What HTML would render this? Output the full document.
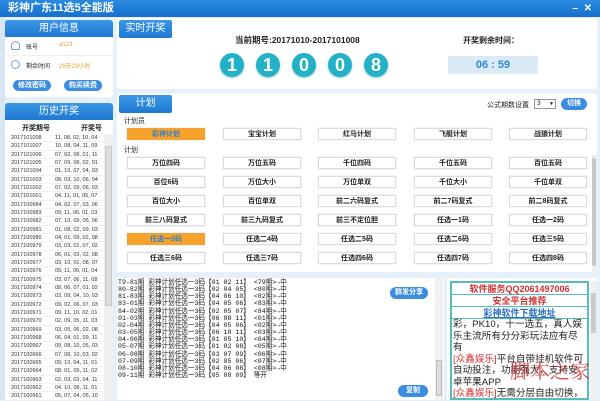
<!DOCTYPE html>
<html><head><meta charset="utf-8"><style>
*{margin:0;padding:0;box-sizing:border-box}
body{width:600px;height:400px;overflow:hidden;background:#e6f0fa;font-family:"Liberation Sans","Noto Sans CJK SC",sans-serif;position:relative;color:#222}
.a{position:absolute}
.tb{left:0;top:0;width:600px;height:17px;background:linear-gradient(#2a8ae0,#1670cc);color:#fff;font-weight:bold;font-size:11px;line-height:17px;padding-left:8px}
.panel{background:#fff;border-radius:3px}
.hd{background:linear-gradient(#3d97e6,#1e78d2);color:#fff;font-size:10px;text-align:center;border-radius:3px 3px 0 0}
.btn{background:#fff;border:1px solid #dcdcdc;font-size:7px;font-weight:bold;text-align:center;line-height:11px;height:12px;width:78px;box-shadow:0 0 1px #ccc}
.btn.o{background:#f7a22a;color:#2e7fd0;border-color:#f0a030}
.pill{background:#3b8de0;color:#fff;font-size:7px;font-weight:bold;border-radius:6px;text-align:center;line-height:11px;height:11px}
.ball{width:24px;height:24px;border-radius:50%;background:#22b1c6;color:#fff;font-weight:bold;font-size:18px;line-height:24px;text-align:center;box-shadow:0 1px 2px #9cc}
.hr{font-size:5.5px;color:#333;height:8.33px;line-height:8.33px;width:98px;border-bottom:1px solid #f0f0f0}
.hr span{display:inline-block;width:50px;padding-left:6px}
.lg{font-size:6.6px;line-height:7.15px;font-family:"Liberation Mono","Noto Sans CJK SC",monospace;white-space:pre;color:#111}
.ad{font-size:9px;text-align:center;font-weight:bold;border-bottom:1px solid #5bb;height:12px;line-height:12px}
</style></head><body>
<div class="a tb">彩神广东11选5全能版<span style="position:absolute;right:8px;top:0;font-size:10px">–&nbsp;&nbsp;✕</span></div>
<div class="a" style="left:0;top:17px;width:5px;height:383px;background:#d6e6f4"></div>

<div class="a panel" style="left:5px;top:20px;width:108px;height:77px"></div>
<div class="a hd" style="left:5px;top:20px;width:108px;height:17px;line-height:17px">用户信息</div>
<div class="a" style="left:11px;top:41px;width:9px;height:9px;border:1px solid #7aa0c8;border-radius:50% 50% 2px 2px"></div>
<div class="a" style="left:26px;top:42px;font-size:6px">账号</div>
<div class="a" style="left:59px;top:42px;font-size:6px;color:#e0a030">a123</div>
<div class="a" style="left:5px;top:55px;width:108px;height:1px;background:#eee"></div>
<div class="a" style="left:11px;top:60px;width:9px;height:9px;border:1px solid #7aa0c8;border-radius:50%"></div>
<div class="a" style="left:26px;top:61px;font-size:6px">剩余时间</div>
<div class="a" style="left:59px;top:61px;font-size:6px;color:#e0a030">29天23小时</div>
<div class="a pill" style="left:13px;top:80px;width:38px">修改密码</div>
<div class="a pill" style="left:64px;top:80px;width:38px">购买续费</div>

<div class="a panel" style="left:5px;top:103px;width:108px;height:297px"></div>
<div class="a hd" style="left:5px;top:103px;width:108px;height:17px;line-height:17px">历史开奖</div>
<div class="a" style="left:22px;top:123px;font-size:7px;font-weight:bold">开奖期号</div>
<div class="a" style="left:81px;top:123px;font-size:7px;font-weight:bold">开奖号</div>
<div class="a" style="left:104px;top:134px;width:9px;height:266px;background:#f0f0f0"></div>
<div class="a" style="left:105px;top:146px;width:7px;height:160px;background:#dcdcdc;border:1px solid #c8c8c8"></div>
<div class="a" style="left:5px;top:134px">
<div class="hr"><span>2017101008</span>11, 08, 02, 10, 04</div>
<div class="hr"><span>2017101007</span>10, 08, 04, 11, 09</div>
<div class="hr"><span>2017101006</span>07, 02, 08, 01, 11</div>
<div class="hr"><span>2017101005</span>07, 09, 08, 02, 01</div>
<div class="hr"><span>2017101004</span>01, 10, 07, 04, 03</div>
<div class="hr"><span>2017101003</span>08, 03, 10, 06, 04</div>
<div class="hr"><span>2017101002</span>07, 02, 09, 06, 03</div>
<div class="hr"><span>2017101001</span>04, 11, 01, 05, 07</div>
<div class="hr"><span>2017100984</span>04, 02, 07, 03, 06</div>
<div class="hr"><span>2017100983</span>09, 11, 06, 01, 03</div>
<div class="hr"><span>2017100982</span>07, 10, 09, 05, 06</div>
<div class="hr"><span>2017100981</span>01, 08, 02, 09, 03</div>
<div class="hr"><span>2017100980</span>04, 01, 09, 02, 08</div>
<div class="hr"><span>2017100979</span>03, 03, 01, 07, 02</div>
<div class="hr"><span>2017100978</span>06, 01, 03, 02, 08</div>
<div class="hr"><span>2017100977</span>03, 10, 01, 08, 07</div>
<div class="hr"><span>2017100976</span>09, 11, 06, 01, 04</div>
<div class="hr"><span>2017100975</span>03, 07, 06, 11, 08</div>
<div class="hr"><span>2017100974</span>08, 06, 07, 01, 02</div>
<div class="hr"><span>2017100973</span>03, 09, 04, 10, 03</div>
<div class="hr"><span>2017100972</span>09, 02, 06, 07, 03</div>
<div class="hr"><span>2017100971</span>09, 11, 10, 02, 01</div>
<div class="hr"><span>2017100970</span>02, 09, 05, 11, 03</div>
<div class="hr"><span>2017100969</span>03, 05, 06, 02, 08</div>
<div class="hr"><span>2017100968</span>06, 04, 01, 09, 11</div>
<div class="hr"><span>2017100967</span>09, 08, 10, 05, 03</div>
<div class="hr"><span>2017100966</span>07, 08, 10, 03, 02</div>
<div class="hr"><span>2017100965</span>09, 10, 04, 11, 01</div>
<div class="hr"><span>2017100964</span>08, 01, 09, 11, 02</div>
<div class="hr"><span>2017100963</span>02, 03, 03, 04, 11</div>
<div class="hr"><span>2017100962</span>04, 10, 08, 11, 01</div>
<div class="hr"><span>2017100961</span>05, 07, 04, 05, 10</div>
</div>

<div class="a panel" style="left:117px;top:18px;width:480px;height:71px"></div>
<div class="a hd" style="left:119px;top:20px;width:53px;height:18px;line-height:18px;border-radius:2px">实时开奖</div>
<div class="a" style="left:235px;top:34px;font-size:8.5px;font-weight:bold">当前期号:20171010-2017101008</div>
<div class="a" style="left:463px;top:35px;font-size:8px;font-weight:bold">开奖剩余时间：</div>
<div class="a" style="left:448px;top:56px;width:90px;height:18px;background:#dbeaf7;color:#2a86d6;font-weight:bold;font-size:11px;text-align:center;line-height:18px">06 : 59</div>
<div class="a ball" style="left:220px;top:53px">1</div>
<div class="a ball" style="left:256px;top:53px">1</div>
<div class="a ball" style="left:292px;top:53px">0</div>
<div class="a ball" style="left:328px;top:53px">0</div>
<div class="a ball" style="left:364px;top:53px">8</div>

<div class="a panel" style="left:117px;top:93px;width:480px;height:179px"></div>
<div class="a hd" style="left:119px;top:95px;width:53px;height:18px;line-height:18px;border-radius:2px">计划</div>
<div class="a" style="left:487px;top:100px;font-size:7px">公式期数设置</div>
<div class="a" style="left:534px;top:99px;width:22px;height:10px;border:1px solid #999;background:#fff;font-size:6.5px;line-height:8px;padding-left:2px">3 <span style="float:right;font-size:5px;padding-right:1px">▼</span></div>
<div class="a pill" style="left:561px;top:98px;width:26px;height:12px;line-height:12px">切换</div>
<div class="a" style="left:124px;top:116px;font-size:7px">计划员</div>
<div class="a" style="left:124px;top:145px;font-size:7px">计划</div>
<div class="a" style="left:592px;top:155px;width:5px;height:117px;background:#eee"></div>
<div class="a" style="left:592px;top:158px;width:4px;height:108px;background:#c8c8c8;border-radius:2px"></div>

<div class="a btn o" style="left:127px;top:128px">彩神计划</div>
<div class="a btn" style="left:223px;top:128px">宝宝计划</div>
<div class="a btn" style="left:318px;top:128px">红马计划</div>
<div class="a btn" style="left:414px;top:128px">飞艇计划</div>
<div class="a btn" style="left:509px;top:128px">战狼计划</div>

<div class="a btn" style="left:127px;top:157px">万位四码</div>
<div class="a btn" style="left:223px;top:157px">万位五码</div>
<div class="a btn" style="left:318px;top:157px">千位四码</div>
<div class="a btn" style="left:414px;top:157px">千位五码</div>
<div class="a btn" style="left:509px;top:157px">百位五码</div>

<div class="a btn" style="left:127px;top:176px">百位6码</div>
<div class="a btn" style="left:223px;top:176px">万位大小</div>
<div class="a btn" style="left:318px;top:176px">万位单双</div>
<div class="a btn" style="left:414px;top:176px">千位大小</div>
<div class="a btn" style="left:509px;top:176px">千位单双</div>

<div class="a btn" style="left:127px;top:195px">百位大小</div>
<div class="a btn" style="left:223px;top:195px">百位单双</div>
<div class="a btn" style="left:318px;top:195px">前二六码复式</div>
<div class="a btn" style="left:414px;top:195px">前二7码复式</div>
<div class="a btn" style="left:509px;top:195px">前二8码复式</div>

<div class="a btn" style="left:127px;top:214px">前三八码复式</div>
<div class="a btn" style="left:223px;top:214px">前三九码复式</div>
<div class="a btn" style="left:318px;top:214px">前三不定位胆</div>
<div class="a btn" style="left:414px;top:214px">任选一1码</div>
<div class="a btn" style="left:509px;top:214px">任选一2码</div>

<div class="a btn o" style="left:127px;top:233px">任选一3码</div>
<div class="a btn" style="left:223px;top:233px">任选二4码</div>
<div class="a btn" style="left:318px;top:233px">任选二5码</div>
<div class="a btn" style="left:414px;top:233px">任选二6码</div>
<div class="a btn" style="left:509px;top:233px">任选三5码</div>

<div class="a btn" style="left:127px;top:252px">任选三6码</div>
<div class="a btn" style="left:223px;top:252px">任选三7码</div>
<div class="a btn" style="left:318px;top:252px">任选四6码</div>
<div class="a btn" style="left:414px;top:252px">任选四7码</div>
<div class="a btn" style="left:509px;top:252px">任选四8码</div>

<div class="a" style="left:117px;top:278px;width:327px;height:122px;background:#fff"></div>
<div class="a lg" style="left:118px;top:279px">T9-81期 彩神计划任选一3码【01 02 11】 &lt;79期&gt;→中
80-82期 彩神计划任选一3码【02 04 05】 &lt;80期&gt;→中
81-83期 彩神计划任选一3码【04 06 10】 &lt;82期&gt;→中
83-01期 彩神计划任选一3码【04 05 06】 &lt;83期&gt;→中
84-02期 彩神计划任选一3码【02 05 07】 &lt;84期&gt;→中
01-03期 彩神计划任选一3码【06 08 11】 &lt;01期&gt;→中
02-04期 彩神计划任选一3码【04 05 06】 &lt;02期&gt;→中
03-05期 彩神计划任选一3码【06 10 11】 &lt;03期&gt;→中
04-06期 彩神计划任选一3码【01 05 10】 &lt;04期&gt;→中
05-07期 彩神计划任选一3码【01 02 08】 &lt;05期&gt;→中
06-08期 彩神计划任选一3码【03 07 09】 &lt;06期&gt;→中
07-09期 彩神计划任选一3码【02 05 06】 &lt;07期&gt;→中
08-10期 彩神计划任选一3码【04 06 08】 &lt;08期&gt;→中
09-11期 彩神计划任选一3码【05 08 09】 等开</div>
<div class="a pill" style="left:390px;top:287px;width:38px;height:12px;line-height:12px">群发分享</div>
<div class="a pill" style="left:398px;top:385px;width:30px;height:12px;line-height:12px">复制</div>
<div class="a" style="left:435px;top:278px;width:8px;height:122px;background:#f0f0f0"></div>
<div class="a" style="left:436px;top:360px;width:6px;height:36px;background:#ddd;border:1px solid #bbb"></div>

<div class="a" style="left:447px;top:278px;width:150px;height:122px;background:#fff"></div>
<div class="a" style="left:450px;top:281px;width:139px;height:119px;border:2px solid #5bb;background:#fff;overflow:hidden">
<div class="ad" style="color:#d03030">软件服务QQ2061497006</div>
<div class="ad" style="color:#d03030">安全平台推荐</div>
<div class="ad" style="color:#2a6fc0;text-decoration:underline">彩神软件下载地址</div>
<div style="font-size:9.6px;line-height:11.5px;padding:0 1px;text-align:left">彩，PK10，十一选五，真人娱乐主流所有分分彩玩法应有尽有<br><span style="color:#d03030">[众鑫娱乐]</span>平台自带挂机软件可自动投注，功能强大，支持安卓苹果APP<br><span style="color:#d03030">[众鑫娱乐]</span>无需分层自由切换，平台程序流畅，操作简</div>
</div>
<div class="a" style="left:590px;top:281px;width:7px;height:119px;background:#f0f0f0"></div>
<div class="a" style="left:591px;top:293px;width:5px;height:40px;background:#ccc"></div>
<div class="a" style="left:510px;top:355px;font-size:20px;color:#d02020;font-family:'Noto Serif CJK SC',serif;opacity:.8">脚本之家</div>
</body></html>
